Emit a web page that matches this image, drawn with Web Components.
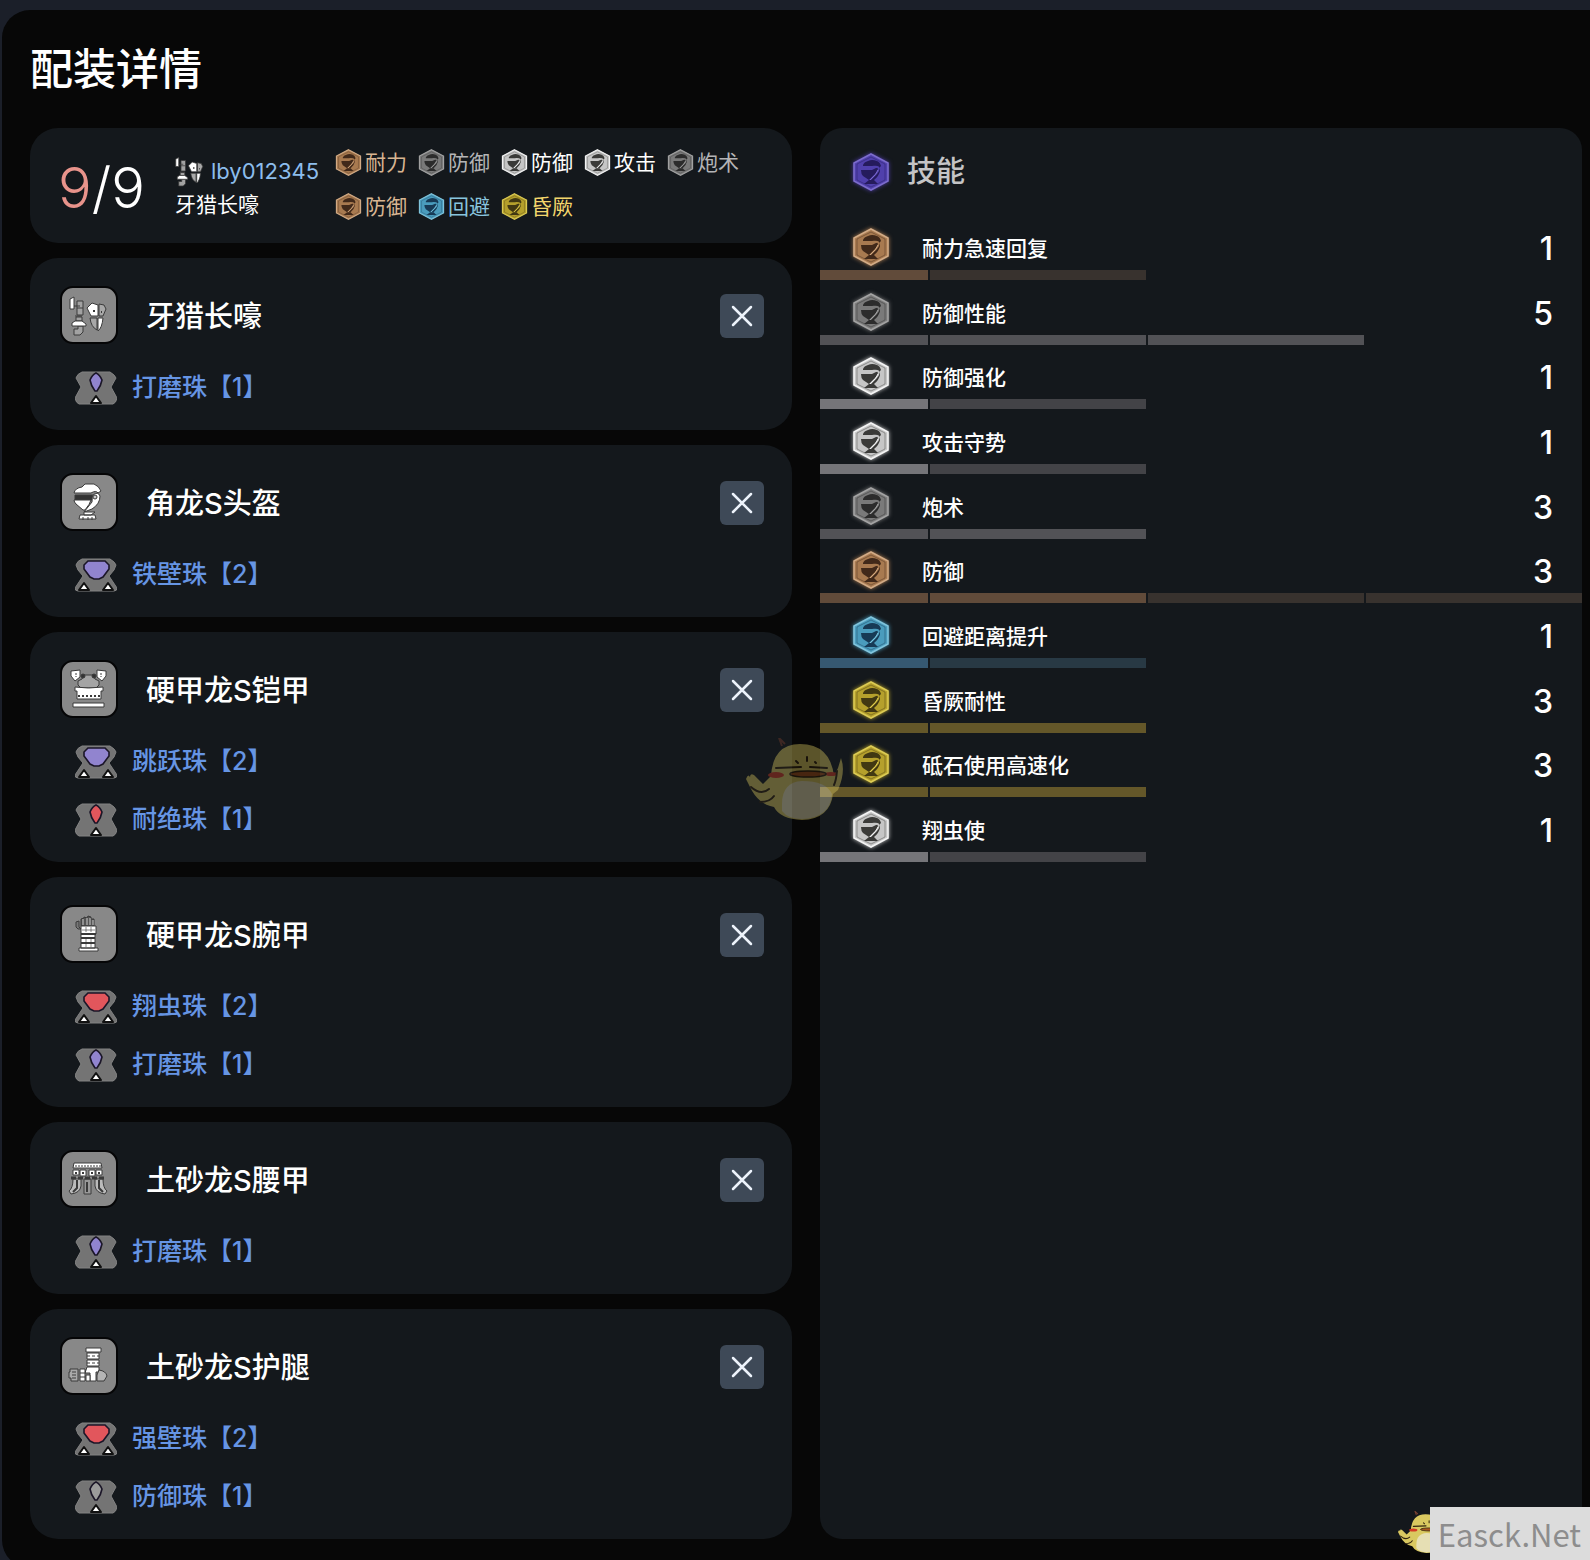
<!DOCTYPE html>
<html lang="zh-CN">
<head>
<meta charset="utf-8">
<meta name="viewport" content="width=device-width, initial-scale=1">
<title>配装详情</title>
<style>
	body {
		margin: 0;
		background-color: #1b1f29;
		color: #fff;
		font-family: Inter, "Noto Sans CJK SC", sans-serif;
		overflow-x: hidden;
	}
</style>
</head>
<body>
<build-page heading="配装详情">
	<build-summary slot="gear" have="9" total="9" user="lby012345" weapon="牙猎长嚎">
		<skill-tag tone="orange">耐力</skill-tag>
		<skill-tag tone="gray">防御</skill-tag>
		<skill-tag tone="white">防御</skill-tag>
		<skill-tag tone="white">攻击</skill-tag>
		<skill-tag tone="gray">炮术</skill-tag>
		<skill-tag tone="orange">防御</skill-tag>
		<skill-tag tone="blue">回避</skill-tag>
		<skill-tag tone="yellow">昏厥</skill-tag>
	</build-summary>
	<gear-card slot="gear" kind="weapon" name="牙猎长嚎">
		<gem-link level="1" tone="purple">打磨珠【1】</gem-link>
	</gear-card>
	<gear-card slot="gear" kind="head" name="角龙S头盔">
		<gem-link level="2" tone="purple">铁壁珠【2】</gem-link>
	</gear-card>
	<gear-card slot="gear" kind="chest" name="硬甲龙S铠甲">
		<gem-link level="2" tone="purple">跳跃珠【2】</gem-link>
		<gem-link level="1" tone="red">耐绝珠【1】</gem-link>
	</gear-card>
	<gear-card slot="gear" kind="arms" name="硬甲龙S腕甲">
		<gem-link level="2" tone="red">翔虫珠【2】</gem-link>
		<gem-link level="1" tone="purple">打磨珠【1】</gem-link>
	</gear-card>
	<gear-card slot="gear" kind="waist" name="土砂龙S腰甲">
		<gem-link level="1" tone="purple">打磨珠【1】</gem-link>
	</gear-card>
	<gear-card slot="gear" kind="legs" name="土砂龙S护腿">
		<gem-link level="2" tone="red">强壁珠【2】</gem-link>
		<gem-link level="1" tone="gray">防御珠【1】</gem-link>
	</gear-card>

	<skill-panel slot="skills" heading="技能">
		<skill-row tone="orange" level="1" on="1" cells="2">耐力急速回复</skill-row>
		<skill-row tone="gray" level="5" on="3" cells="3">防御性能</skill-row>
		<skill-row tone="white" level="1" on="1" cells="2">防御强化</skill-row>
		<skill-row tone="white" level="1" on="1" cells="2">攻击守势</skill-row>
		<skill-row tone="gray" level="3" on="2" cells="2">炮术</skill-row>
		<skill-row tone="orange" level="3" on="2" cells="4">防御</skill-row>
		<skill-row tone="blue" level="1" on="1" cells="2">回避距离提升</skill-row>
		<skill-row tone="yellow" level="3" on="2" cells="2">昏厥耐性</skill-row>
		<skill-row tone="yellow" level="3" on="2" cells="2">砥石使用高速化</skill-row>
		<skill-row tone="white" level="1" on="1" cells="2">翔虫使</skill-row>
	</skill-panel>
</build-page>
<bird-mark></bird-mark>
<site-badge>Easck.Net</site-badge>

<script>
// hexagon fill, edge, glyph, tag text, bar on, bar off
const tones = {
	orange: ['#a87a50', '#d2ab86', '#41291a', '#d8b592', '#614b3a', '#38322e'],
	gray: ['#7a7a7a', '#a3a3a3', '#2c2c2c', '#b4b4b6', '#525256', '#3a3a3e'],
	white: ['#c6c6c6', '#f4f4f4', '#3a3a38', '#ffffff', '#757579', '#434347'],
	blue: ['#4a9cbd', '#80c4dc', '#173a55', '#88c4de', '#365871', '#283944'],
	yellow: ['#b5a02c', '#dccb54', '#413812', '#f3d66c', '#645729', '#38341f'],
	purple: ['#5040ac', '#7c6ccc', '#251b5c', '#9a8cd6', '#433a78', '#2b2848']
};

const gemTones = { purple: '#9184cf', red: '#e2565c', gray: '#9b9b9b' };

const gearArt = {
	weapon: `
		<path d="M8 11l4-2v12H8z" fill="#fff"/>
		<path d="M15 13h6v14h-6zM14 29h6v4h-6zM12 41h4v-3h5v6l-3 3h-6z" fill="#a2a2a2"/>
		<path d="M12 18h6M13 28h7M15 20h6"/>
		<path d="M10 35l3-2h7l4 3v2H10z" fill="#fff"/>
		<path d="M25 20l5-5 6 2v11h-7z" fill="#fff"/>
		<path d="M37 16l5 1 2 4-3 7h-4zM28 30h7v12q-6-3-7-12z" fill="#a8a8a8"/>
		<path d="M36 30h5q-1 10-5 13z" fill="#fff"/>
		<path d="M31 23h2M39 24h1" stroke-width="2"/>`,
	head: `
		<path d="M12 18q1-5 8-6l3-3h9q5 2 7 7l-3 2q-2-3-7 0z" fill="#fff"/>
		<path d="M13 20h18v5H13z" fill="#333"/>
		<path d="M12 25h17q-1 4-6 10h-2l-7-6q-2-2-2-4z" fill="#fff"/>
		<path d="M31 20q5-4 7 1 0 8-8 13l-8 3 8-10q0-5 1-7z" fill="#fff"/>
		<circle cx="33" cy="22" r="2" fill="#ccc"/>
		<path d="M22 37h11l-4 3h-7zM18 40h15l1 4H17z" fill="#fff"/>
		<path d="M21 42v3M26 42v3M30 42v3"/>`,
	chest: `
		<path d="M9 9l9-1v7l-5 4-4-5zM44 9l-9-1v7l5 4 4-5z" fill="#fff"/>
		<path d="M22 13h9l2 4 4 2v4l-3 3H19l-3-3v-4l4-2z" fill="#a4a4a4"/>
		<circle cx="21" cy="14" r="2" fill="#333"/><circle cx="32" cy="14" r="2" fill="#333"/>
		<path d="M13 25q13 2 28 0v4h-2v8H15v-8h-2z" fill="#fff"/>
		<path d="M16 34h22" stroke-width="2" stroke-dasharray="2 2"/>
		<path d="M11 41h31v4H11z" fill="#fff"/>
		<path d="M14 11v4M39 11v4" stroke-dasharray="2 1"/>`,
	arms: `
		<path d="M14 15l3-1v6l2 2h-3l-2-2z" fill="#777"/>
		<path d="M19 19v-7l3-1v-1l3 1 1-2 3 1v2h3v8z" fill="#555"/>
		<path d="M21 12v6M25 11v7M28 11v7M31 13v5" stroke="#ccc"/>
		<path d="M19 19h15v8H19zM19 27h14v4H19zM19 31h14v10H19zM17 41h19v3H17z" fill="#fff"/>
		<path d="M19 27h15M19 31h14M19 36h14" stroke-width="2"/>
		<path d="M24 20v5M29 20v5M24 32v8M29 32v8M20 23h13" stroke-width="1" opacity=".6"/>`,
	waist: `
		<path d="M12 11h27l1 5H11z" fill="#fff"/><path d="M13 14h26" stroke-dasharray="2 1"/>
		<path d="M11 18h6v5h-6zM18 18h6v6h-6zM27 18h6v6h-6zM34 18h6v5h-6z" fill="#fff"/>
		<path d="M14 20v2M21 20v2M30 20v2M37 20v2" stroke-width="2"/>
		<path d="M11 27h8v7q-1 7-10 8l-2-3q4-3 4-12zM33 27h8q0 9 4 12l-2 3q-9-1-10-8z" fill="#bbb"/>
		<path d="M22 27h7v15h-7z" fill="#999"/>
		<path d="M15 28v8l-4 4M37 28v8l4 4M25 30v10" stroke-width="2"/>
		<path d="M9 26h34" stroke-width="3" stroke-dasharray="5 2"/>`,
	legs: `
		<path d="M24 9h15v4H24zM25 14h12v6H25zM25 21h12v6H25z" fill="#fff"/>
		<path d="M25 17h12M25 24h12" stroke-dasharray="3 2"/>
		<path d="M25 28h12v5h-3v9h-6v-8h-5z" fill="#fff"/>
		<path d="M37 31q7 1 8 6l-3 5h-7v-6z" fill="#b4b4b4"/>
		<path d="M8 30h8v12H9v-3H7v-6h1z" fill="#aaa"/>
		<path d="M18 30h5v12h-5zM24 36h4v6h-4z" fill="#fff"/>
		<path d="M10 33h4M10 36h4M10 39h4M18 34h5M18 38h5"/>`
};

function hexIcon(tone) {
	const [fill, edge, ink] = tones[tone];
	return `<svg viewBox="0 0 38 38" aria-hidden="true">
		<path d="M19 1l17 9v18l-17 9-17-9V10z" fill="${fill}" stroke="${edge}" stroke-width="1.6"/>
		<path d="M19 4l14 7v16l-14 7-14-7V11z" fill="none" stroke="${ink}" stroke-width=".7" opacity=".6"/>
		<path d="M11 12q1-3 5-4 4-2 9 0 3 1 4 5l-2 2q-3-3-7-2H11z" fill="${ink}"/>
		<path d="M9 17h11l4-2q4-1 4 3-1 5-6 9h-5l-6-4q-2-2-2-6z" fill="${ink}"/>
		<path d="M10 15h9q4-2 7-1 2 3-2 7l-7 7" fill="none" stroke="${fill}" stroke-width="1.6"/>
		<path d="M26 17q-1 4-8 10" fill="none" stroke="${edge}" stroke-width="1"/>
		<path d="M17 27h5l4 4H12z" fill="${ink}"/>
	</svg>`;
}

function gearIcon(kind) {
	return `<svg viewBox="0 0 54 54" aria-hidden="true" fill="none" stroke="#3a3a3a" stroke-width="1">${gearArt[kind]}</svg>`;
}

function gemIcon(level, tone) {
	const color = gemTones[tone];
	if (level === '1') {
		return `<svg viewBox="0 0 42 34" aria-hidden="true">
			<path d="M7 1h28q5 3 6 6l-5 9 6 11q-1 5-4 6H4q-3-1-4-6l6-11-5-9q1-4 6-6z" fill="#747474" stroke="#828282"/>
			<path d="M21 2q4 2 6 7-1 6-5 11h-2q-4-5-5-11 2-5 6-7z" fill="${color}" stroke="#1b1628" stroke-width="1.6"/>
			<path d="M21 25l5 7H16z" fill="#fff" stroke="#111" stroke-width="2" stroke-linejoin="round"/>
		</svg>`;
	}
	return `<svg viewBox="0 0 42 34" aria-hidden="true">
		<path d="M7 1h28q5 3 6 6l-2 5-5 6 8 12q0 3-3 3H3q-3 0-3-3l8-12-5-6-2-5q1-4 6-6z" fill="#747474" stroke="#828282"/>
		<path d="M13 3h17l4 4v4l-6 8-4 2h-5l-4-2-6-8V7z" fill="${color}" stroke="#1b1628" stroke-width="1.6"/>
		<path d="M9 25l5 7H4zM33 25l5 7H28z" fill="#fff" stroke="#111" stroke-width="2" stroke-linejoin="round"/>
	</svg>`;
}

const birdArt = `<svg viewBox="0 0 98 84" aria-hidden="true">
	<path d="M36 8l-3-8 6 6" fill="none" stroke="#7a4030" stroke-width="2"/>
	<path d="M25 38Q27 6 54 6q30 0 34 32l4-8 3-10q5 14-3 32l-5 4Q84 81 56 82q-22-1-28-13-16-3-24-20l-4-8q2-6 4-2 0-4 4-2l9 9z" fill="#d9c860"/>
	<path d="M36 66q0-22 20-23 24 0 30 13-2 24-30 25-14 0-20-8z" fill="#e6dfb4"/>
	<ellipse cx="30" cy="37" rx="8" ry="3" fill="#d33a24"/><ellipse cx="85" cy="36" rx="6" ry="2" fill="#d33a24"/>
	<ellipse cx="62" cy="36" rx="18" ry="3" fill="#a8541f" stroke="#33240f" stroke-width="1.5"/>
	<path d="M30 30l25-1M64 29l17 1M50 23l2 2M61 19v4M69 24l1 1M5 49q10 9 18 2M14 64q10 0 14-6M91 33q-1 10-3 14" fill="none" stroke="#33240f" stroke-width="2" stroke-linecap="round"/>
</svg>`;

class BuildPage extends HTMLElement {
	connectedCallback() {
		const root = this.attachShadow({ mode: 'open' });
		root.innerHTML = `
		<style>
			:host { display: block; padding: 10px 0 0 2px; }
			main {
				background-color: #070707;
				border-radius: 28px 0 0 28px;
				padding: 38px 8px 29px 28px;
			}
			h1 { margin: 0 0 37px; font-size: 43px; line-height: 43px; font-weight: 500; }
			.columns { display: grid; grid-template-columns: 1fr 1fr; gap: 28px; }
			.gear { display: flex; flex-direction: column; gap: 15px; }
			.skills { display: grid; }
			@media (max-width: 900px) {
				.columns { grid-template-columns: 1fr; }
			}
		</style>
		<main>
			<h1>${this.getAttribute('heading')}</h1>
			<div class="columns">
				<div class="gear"><slot name="gear"></slot></div>
				<div class="skills"><slot name="skills"></slot></div>
			</div>
		</main>`;
	}
}

class BuildSummary extends HTMLElement {
	connectedCallback() {
		const root = this.attachShadow({ mode: 'open' });
		root.innerHTML = `
		<style>
			:host {
				display: flex;
				align-items: center;
				min-height: 115px;
				box-sizing: border-box;
				padding: 0 28px;
				border-radius: 28px;
				background-color: #14181c;
			}
			.score { flex: none; width: 117px; padding-top: 4px; font-size: 56px; line-height: 64px; font-weight: 300; }
			.score b { font-weight: 300; color: #e8938b; }
			.owner { flex: none; width: 160px; padding-top: 4px; font-size: 21px; line-height: 34px; }
			.owner a { display: flex; align-items: center; gap: 6px; color: #8cbdec; font-size: 22px; text-decoration: none; }
			.owner svg { width: 30px; height: 34px; }
			.tags { display: flex; flex-wrap: wrap; column-gap: 11px; }
		</style>
		<div class="score"><b>${this.getAttribute('have')}</b>/${this.getAttribute('total')}</div>
		<div class="owner">
			<a href="#user">${gearIcon('weapon').replace('0 0 54 54', '7 7 40 40')}<span>${this.getAttribute('user')}</span></a>
			<div>${this.getAttribute('weapon')}</div>
		</div>
		<div class="tags"><slot></slot></div>`;
	}
}

class SkillTag extends HTMLElement {
	connectedCallback() {
		const root = this.attachShadow({ mode: 'open' });
		const tone = this.getAttribute('tone');
		root.innerHTML = `
		<style>
			:host { display: flex; align-items: center; gap: 3px; font-size: 21px; line-height: 42px; padding-bottom: 2px; color: ${tones[tone][3]}; }
			svg { width: 27px; height: 27px; }
		</style>
		${hexIcon(tone)}<span><slot></slot></span>`;
	}
}

class GearCard extends HTMLElement {
	connectedCallback() {
		const root = this.attachShadow({ mode: 'open' });
		root.innerHTML = `
		<style>
			:host {
				display: block;
				padding: 28px 28px 13px 30px;
				border-radius: 28px;
				background-color: #14181c;
			}
			.head { display: flex; align-items: center; gap: 28px; margin-bottom: 15px; }
			.art {
				flex: none;
				width: 54px;
				height: 54px;
				border: 2px solid #050506;
				border-radius: 13px;
				background-color: #888;
			}
			.art svg { display: block; }
			h2 { flex: 1; margin: 0; padding-top: 3px; font-size: 29px; line-height: 55px; font-weight: 500; }
			button {
				flex: none;
				display: grid;
				place-items: center;
				width: 44px;
				height: 44px;
				margin-top: 2px;
				padding: 0;
				border: 0;
				border-radius: 6px;
				background-color: #3e4957;
				cursor: pointer;
			}
			button svg { width: 22px; height: 22px; }
		</style>
		<div class="head">
			<div class="art">${gearIcon(this.getAttribute('kind'))}</div>
			<h2>${this.getAttribute('name')}</h2>
			<button type="button" aria-label="移除 ${this.getAttribute('name')}">
				<svg viewBox="0 0 22 22"><path d="M2 2l18 18M20 2L2 20" stroke="#edf3fb" stroke-width="2.5" stroke-linecap="round"/></svg>
			</button>
		</div>
		<slot></slot>`;

		root.querySelector('button').addEventListener('click', () => this.remove());
	}
}

class GemLink extends HTMLElement {
	connectedCallback() {
		const root = this.attachShadow({ mode: 'open' });
		root.innerHTML = `
		<style>
			:host { display: block; }
			a {
				display: flex;
				align-items: center;
				gap: 15px;
				padding-left: 15px;
				color: #6695e4;
				font-size: 25px;
				font-weight: 500;
				line-height: 56px;
				text-decoration: none;
			}
			svg { width: 42px; height: 34px; }
			span { padding-bottom: 2px; }
		</style>
		<a href="#gem">${gemIcon(this.getAttribute('level'), this.getAttribute('tone'))}<span><slot></slot></span></a>`;
	}
}

class SkillPanel extends HTMLElement {
	connectedCallback() {
		const root = this.attachShadow({ mode: 'open' });
		root.innerHTML = `
		<style>
			:host { display: block; border-radius: 22px; background-color: #14181c; }
			h2 {
				display: flex;
				align-items: center;
				gap: 17px;
				margin: 0;
				padding-left: 32px;
				color: #c4c4c6;
				font-size: 29px;
				line-height: 87px;
				font-weight: 500;
			}
			svg { width: 38px; height: 38px; filter: drop-shadow(0 0 2px #4a3aa0); }
		</style>
		<h2>${hexIcon('purple')}<span>${this.getAttribute('heading')}</span></h2>
		<slot></slot>`;
	}
}

class SkillRow extends HTMLElement {
	connectedCallback() {
		const root = this.attachShadow({ mode: 'open' });
		const tone = this.getAttribute('tone');
		const on = Number(this.getAttribute('on'));
		const cells = Number(this.getAttribute('cells'));
		let bar = '';
		for (let i = 0; i < cells; i++) {
			bar += `<i class="${i < on ? 'on' : ''}"></i>`;
		}
		root.innerHTML = `
		<style>
			:host { display: block; }
			.line { display: flex; align-items: center; gap: 32px; padding: 9px 29px 0 32px; line-height: 42px; }
			:host(:nth-child(3n)) .line { padding-top: 8px; }
			svg { flex: none; width: 38px; height: 38px; filter: drop-shadow(0 0 2px ${tones[tone][0]}); }
			.name, .level { padding-top: 4px; font-weight: 500; }
			.name { flex: 1; font-size: 21px; }
			.level { font-size: 32px; }
			/* the first cell is half as wide as the others */
			.bar { display: grid; grid-template-columns: 1fr 2fr 2fr 2fr; gap: 2px; height: 10px; }
			i { background-color: ${tones[tone][5]}; }
			i.on { background-color: ${tones[tone][4]}; }
		</style>
		<div class="line">
			${hexIcon(tone)}
			<span class="name"><slot></slot></span>
			<span class="level">${this.getAttribute('level')}</span>
		</div>
		<div class="bar">${bar}</div>`;
	}
}

// Mascot floating over the middle of the window
class BirdMark extends HTMLElement {
	connectedCallback() {
		const root = this.attachShadow({ mode: 'open' });
		root.innerHTML = `
		<style>
			:host {
				position: fixed;
				top: 50%;
				left: 50%;
				width: 98px;
				transform: translate(-50%, -50%);
				opacity: .4;
				pointer-events: none;
			}
			svg { display: block; }
		</style>
		${birdArt}`;
	}
}

class SiteBadge extends HTMLElement {
	connectedCallback() {
		const root = this.attachShadow({ mode: 'open' });
		root.innerHTML = `
		<style>
			:host { position: fixed; right: 0; bottom: 0; display: flex; align-items: flex-end; }
			svg { width: 50px; height: 43px; margin: 0 -18px 6px 0; }
			span {
				position: relative;
				padding: 0 9px 0 8px;
				background-color: #dcdcdc;
				color: #8d8d8d;
				font: 31px/53px "Noto Sans CJK SC", sans-serif;
			}
		</style>
		${birdArt}<span><slot></slot></span>`;
	}
}

customElements.define('build-page', BuildPage);
customElements.define('build-summary', BuildSummary);
customElements.define('skill-tag', SkillTag);
customElements.define('gear-card', GearCard);
customElements.define('gem-link', GemLink);
customElements.define('skill-panel', SkillPanel);
customElements.define('skill-row', SkillRow);
customElements.define('bird-mark', BirdMark);
customElements.define('site-badge', SiteBadge);
</script>
</body>
</html>
